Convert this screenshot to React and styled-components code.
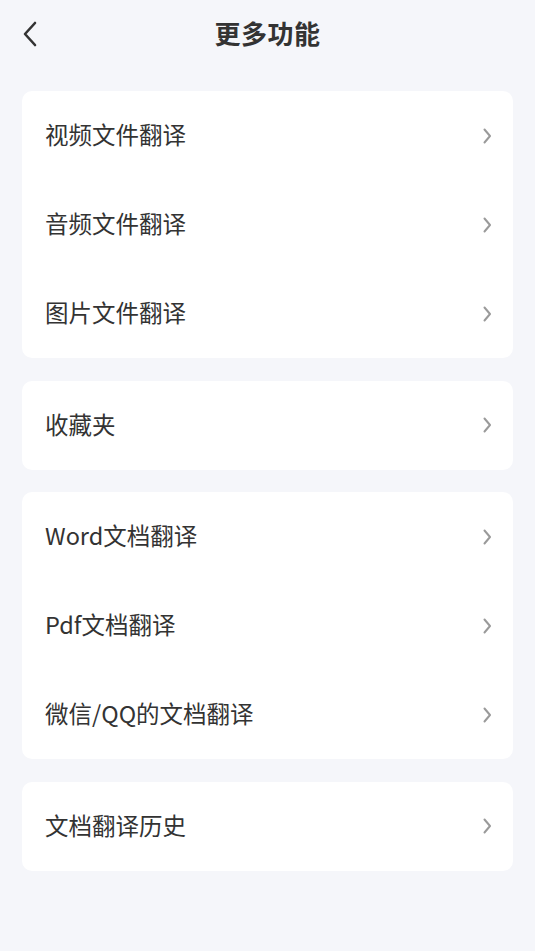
import React from "react";
import styled, { createGlobalStyle } from "styled-components";

const GlobalStyle = createGlobalStyle`
  html, body {
    margin: 0;
    padding: 0;
    background: #f5f6fa;
  }
  body {
    font-family: "Noto Sans CJK SC", "Noto Sans", sans-serif;
    color: #333;
  }
`;

const Page = styled.div`
  width: 535px;
  min-height: 951px;
  background: #f5f6fa;
  display: flex;
  flex-direction: column;
`;

const Header = styled.header`
  height: 70px;
  display: flex;
  align-items: center;
  justify-content: center;
  position: relative;
`;

const BackButton = styled.button`
  position: absolute;
  left: 16px;
  top: 20px;
  width: 28px;
  height: 28px;
  padding: 0;
  border: none;
  background: transparent;
  display: flex;
  align-items: center;
  justify-content: center;
`;

const Title = styled.h1`
  margin: 0 0 5px;
  font-size: 26px;
  line-height: 30px;
  font-weight: 700;
  color: #333;
  letter-spacing: 0.5px;
`;

const List = styled.div`
  display: flex;
  flex-direction: column;
  gap: 22.5px;
  padding: 21px 22px 0;
`;

const Card = styled.section`
  background: #fff;
  border-radius: 10px;
  display: flex;
  flex-direction: column;
`;

const Row = styled.div`
  height: 89px;
  display: flex;
  align-items: center;
  justify-content: space-between;
  padding: 0 21px 0 23px;
`;

const Label = styled.span`
  font-size: 23.5px;
  line-height: 28px;
  margin-bottom: 3px;
  color: #333;
  font-weight: 400;
`;

const Chevron = () => (
  <svg width="10" height="16" viewBox="0 0 10 16" fill="none">
    <path d="M2.5 1.5 L8 8 L2.5 14.5" stroke="#9a9a9a" strokeWidth="2" strokeLinecap="round" strokeLinejoin="round" />
  </svg>
);

const BackIcon = () => (
  <svg width="16" height="26" viewBox="0 0 16 26" fill="none">
    <path d="M13 2 L3 13 L13 24" stroke="#333" strokeWidth="2.6" strokeLinecap="round" strokeLinejoin="round" />
  </svg>
);

const groups = [
  ["视频文件翻译", "音频文件翻译", "图片文件翻译"],
  ["收藏夹"],
  ["Word文档翻译", "Pdf文档翻译", "微信/QQ的文档翻译"],
  ["文档翻译历史"],
];

export default function App() {
  return (
    <>
      <GlobalStyle />
      <Page>
        <Header>
          <BackButton aria-label="返回">
            <BackIcon />
          </BackButton>
          <Title>更多功能</Title>
        </Header>
        <List>
          {groups.map((g, i) => (
            <Card key={i}>
              {g.map((item) => (
                <Row key={item}>
                  <Label>{item}</Label>
                  <Chevron />
                </Row>
              ))}
            </Card>
          ))}
        </List>
      </Page>
    </>
  );
}
